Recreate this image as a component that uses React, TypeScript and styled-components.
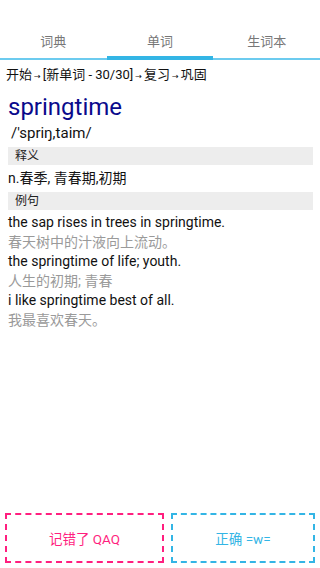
import styled, { createGlobalStyle } from "styled-components";

const GlobalStyle = createGlobalStyle`
  html, body {
    margin: 0;
    padding: 0;
    background: #fff;
  }
  body {
    font-family: Roboto, "Noto Sans CJK SC", sans-serif;
    color: #111;
  }
`;

const Page = styled.div`
  display: flex;
  flex-direction: column;
  height: 100vh;
  overflow: hidden;
`;

const TabBar = styled.div`
  display: flex;
  height: 58px;
  border-bottom: 2px solid #6ccbef;
`;

const Tab = styled.div<{ $active?: boolean }>`
  flex: 1;
  position: relative;
  display: flex;
  align-items: center;
  justify-content: center;
  padding-top: 22px;
  font-size: 13px;
  color: #777;

  &::after {
    content: "";
    display: ${(p) => (p.$active ? "block" : "none")};
    position: absolute;
    left: 0;
    right: 0;
    bottom: -2px;
    height: 4px;
    background: #33b5e5;
  }
`;

const Progress = styled.div`
  margin-top: 5px;
  padding-left: 6px;
  height: 20px;
  font-size: 13px;
  line-height: 20px;
  color: #111;
  white-space: nowrap;
`;

const Arrow = styled.span`
  font-family: "DejaVu Sans", sans-serif;
  font-size: 8px;
  line-height: 0;
  margin: 0 2px;
`;

const Word = styled.div`
  margin-top: 7px;
  padding-left: 8px;
  font-size: 24px;
  line-height: 30px;
  color: #0a0a8c;
`;

const Phonetic = styled.div`
  margin-top: 1px;
  padding-left: 11px;
  font-size: 15px;
  line-height: 20px;
  color: #111;
`;

const SectionBar = styled.div<{ $gap: number }>`
  margin: ${(p) => p.$gap}px 7px 0 8px;
  height: 18px;
  padding-left: 7px;
  background: #ededed;
  font-size: 12px;
  line-height: 18px;
  color: #222;
`;

const Definition = styled.div`
  margin-top: 2px;
  padding-left: 8px;
  font-size: 14px;
  line-height: 22px;
  color: #111;
`;

const Examples = styled.div`
  margin-top: 3px;
  padding-left: 8px;
  font-size: 14px;
  line-height: 19.6px;
`;

const Line = styled.div<{ $muted?: boolean }>`
  color: ${(p) => (p.$muted ? "#9a9a9a" : "#111")};
`;

const Actions = styled.div`
  margin-top: auto;
  display: grid;
  grid-template-columns: 159px 144px;
  gap: 7px;
  padding: 0 5px 5px;
`;

const ActionButton = styled.div<{ $color: string }>`
  height: 50px;
  box-sizing: border-box;
  border: 2px dashed ${(p) => p.$color};
  color: ${(p) => p.$color};
  display: flex;
  align-items: center;
  justify-content: center;
  font-size: 13.5px;
`;

const steps = ["开始", "[新单词 - 30/30]", "复习", "巩固"];

const examples = [
  ["the sap rises in trees in springtime.", "春天树中的汁液向上流动。"],
  ["the springtime of life; youth.", "人生的初期; 青春"],
  ["i like springtime best of all.", "我最喜欢春天。"],
];

export default function App() {
  return (
    <Page>
      <GlobalStyle />
      <TabBar>
        <Tab>词典</Tab>
        <Tab $active>单词</Tab>
        <Tab>生词本</Tab>
      </TabBar>
      <Progress>
        {steps.map((s, i) => (
          <span key={s}>
            {i > 0 && <Arrow>→</Arrow>}
            {s}
          </span>
        ))}
      </Progress>
      <Word>springtime</Word>
      <Phonetic>/'spriŋ,taim/</Phonetic>
      <SectionBar $gap={4}>释义</SectionBar>
      <Definition>n.春季, 青春期,初期</Definition>
      <SectionBar $gap={3}>例句</SectionBar>
      <Examples>
        {examples.map(([en, zh]) => (
          <div key={en}>
            <Line>{en}</Line>
            <Line $muted>{zh}</Line>
          </div>
        ))}
      </Examples>
      <Actions>
        <ActionButton $color="#ff1f7f">记错了 QAQ</ActionButton>
        <ActionButton $color="#33b5e5">正确 =w=</ActionButton>
      </Actions>
    </Page>
  );
}
